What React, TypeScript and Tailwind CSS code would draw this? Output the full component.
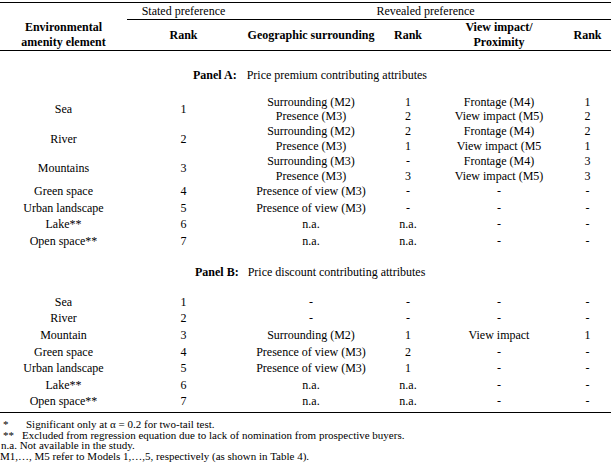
const panelA = [
  { name: 'Sea', rank: '1', rows: [['Surrounding (M2)', '1', 'Frontage (M4)', '1'], ['Presence (M3)', '2', 'View impact (M5)', '2']] },
  { name: 'River', rank: '2', rows: [['Surrounding (M2)', '2', 'Frontage (M4)', '2'], ['Presence (M3)', '1', 'View impact (M5', '1']] },
  { name: 'Mountains', rank: '3', rows: [['Surrounding (M3)', '-', 'Frontage (M4)', '3'], ['Presence (M3)', '3', 'View impact (M5)', '3']] },
];

const panelASingle = [
  { name: 'Green space', rank: '4', cells: ['Presence of view (M3)', '-', '-', '-'], h: 'h-[16.2px]' },
  { name: 'Urban landscape', rank: '5', cells: ['Presence of view (M3)', '-', '-', '-'], h: 'h-[17px]' },
  { name: 'Lake**', rank: '6', cells: ['n.a.', 'n.a.', '-', '-'], h: 'h-[16.6px]' },
  { name: 'Open space**', rank: '7', cells: ['n.a.', 'n.a.', '-', '-'], h: 'h-[17px]' },
];

const panelB = [
  { name: 'Sea', rank: '1', cells: ['-', '-', '-', '-'] },
  { name: 'River', rank: '2', cells: ['-', '-', '-', '-'] },
  { name: 'Mountain', rank: '3', cells: ['Surrounding (M2)', '1', 'View impact', '1'] },
  { name: 'Green space', rank: '4', cells: ['Presence of view (M3)', '2', '-', '-'] },
  { name: 'Urban landscape', rank: '5', cells: ['Presence of view (M3)', '1', '-', '-'] },
  { name: 'Lake**', rank: '6', cells: ['n.a.', 'n.a.', '-', '-'] },
  { name: 'Open space**', rank: '7', cells: ['n.a.', 'n.a.', '-', '-'] },
];

export default function App() {
  return (
    <div className="w-[611px] h-[471px] bg-white text-black [font-family:'Liberation_Serif',serif] text-[12px] pt-[2px] overflow-hidden">
      <table className="w-[611px] table-fixed border-collapse text-center [font-family:'Liberation_Serif',serif] text-[12px]">
        <colgroup>
          <col className="w-[127px]" />
          <col className="w-[113px]" />
          <col className="w-[142px]" />
          <col className="w-[52px]" />
          <col className="w-[130px]" />
          <col className="w-[47px]" />
        </colgroup>
        <thead>
          <tr className="h-[17px] leading-[15px]">
            <td rowSpan={2} className="p-0 border-t border-b border-black font-bold align-bottom leading-[15px]">
              Environmental<br />amenity element
            </td>
            <td className="p-0 pt-[1px] border-t border-b border-black">Stated preference</td>
            <td colSpan={4} className="p-0 pt-[1px] border-t border-b border-black">Revealed preference</td>
          </tr>
          <tr className="h-[30px] font-bold leading-[15px]">
            <td className="p-0 border-b border-black">Rank</td>
            <td className="p-0 border-b border-black">Geographic surrounding</td>
            <td className="p-0 border-b border-black">Rank</td>
            <td className="p-0 border-b border-black">View impact/<br />Proximity</td>
            <td className="p-0 border-b border-black">Rank</td>
          </tr>
        </thead>
        <tbody className="leading-[14px]">
          <tr className="h-[43.7px]">
            <td colSpan={6} className="p-0 pt-[5px] text-left">
              <span className="pl-[193px] font-bold">Panel A:</span>
              <span className="pl-[10px]">Price premium contributing attributes</span>
            </td>
          </tr>
          {panelA.map(g =>
            g.rows.map((r, i) => (
              <tr key={g.name + i} className="h-[14.8px]">
                {i === 0 && (
                  <>
                    <td rowSpan={2} className="p-0">{g.name}</td>
                    <td rowSpan={2} className="p-0">{g.rank}</td>
                  </>
                )}
                {r.map((c, j) => (
                  <td key={j} className="p-0">{c}</td>
                ))}
              </tr>
            ))
          )}
          {panelASingle.map(row => (
            <tr key={row.name} className={row.h}>
              <td className="p-0">{row.name}</td>
              <td className="p-0">{row.rank}</td>
              {row.cells.map((c, j) => (
                <td key={j} className="p-0">{c}</td>
              ))}
            </tr>
          ))}
          <tr className="h-[43.5px]">
            <td colSpan={6} className="p-0 text-left">
              <span className="pl-[195px] font-bold">Panel B:</span>
              <span className="pl-[9px]">Price discount contributing attributes</span>
            </td>
          </tr>
          {panelB.map((row, idx) => {
            const last = idx === panelB.length - 1;
            const cls = last ? 'p-0 pt-[1px] align-top border-b border-black' : 'p-0';
            return (
              <tr key={row.name} className={last ? 'h-[19px]' : 'h-[16.7px]'}>
                <td className={cls}>{row.name}</td>
                <td className={cls}>{row.rank}</td>
                {row.cells.map((c, j) => (
                  <td key={j} className={cls}>{c}</td>
                ))}
              </tr>
            );
          })}
        </tbody>
      </table>
      <div className="mt-[6px] text-[11px] leading-[10.7px]">
        <div><span className="inline-block w-[26px] pl-[3px]">*</span>Significant only at α = 0.2 for two-tail test.</div>
        <div><span className="inline-block w-[22px] pl-[3px]">**</span>Excluded from regression equation due to lack of nomination from prospective buyers.</div>
        <div className="pl-[1px]">n.a. Not available in the study.</div>
        <div>M1,…, M5 refer to Models 1,…,5, respectively (as shown in Table 4).</div>
      </div>
    </div>
  );
}
